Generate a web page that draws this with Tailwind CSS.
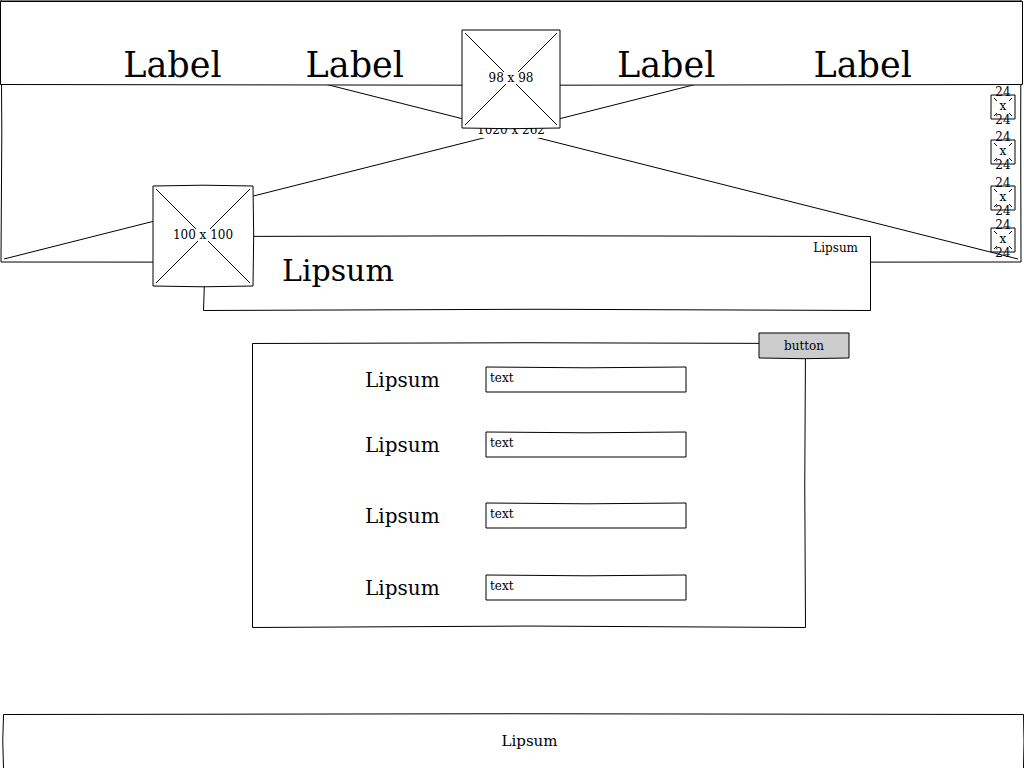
<!DOCTYPE html>
<html lang="en">
<head>
<meta charset="utf-8">
<meta name="viewport" content="width=device-width, initial-scale=1">
<title>Profile wireframe</title>
<script src="https://cdn.jsdelivr.net/npm/@tailwindcss/browser@4"></script>
</head>
<body class="flex min-h-screen flex-col overflow-x-hidden bg-white font-['DejaVu_Serif',serif] text-xs text-black">

<!-- Hero picture with the navigation bar over its top -->
<div class="relative">
  <div class="absolute inset-0 ml-px mr-[3px] flex items-center justify-center">
    <svg class="absolute inset-0 size-full overflow-visible" viewBox="0 0 1020 262" preserveAspectRatio="none" fill="none" stroke="black" aria-hidden="true">
      <path vector-effect="non-scaling-stroke" d="M0 0H1020Q1019.4 131 1020 262Q510 262.8 0 262Q1.6 131 0 0ZM3 3L1017 259M1017 3L3 259"/>
    </svg>
    <span class="relative bg-white pb-0.5 leading-[12px]">1020 x 262</span>
  </div>

  <header class="relative mr-[2px] grid h-[84px] grid-cols-[1fr_98px_1fr] grid-rows-[84px]">
    <svg class="absolute left-0 top-0 h-full w-[calc(100%+1px)] overflow-visible" viewBox="0 0 1023 84" preserveAspectRatio="none" fill="white" stroke="black" aria-hidden="true">
      <path vector-effect="non-scaling-stroke" d="M0.5 1.5H1022.5V84.5Q511 86 0.5 84.5Z"/>
    </svg>
    <nav class="relative flex items-end justify-end gap-[84px] pr-[58px] text-[35px] leading-[38px]" aria-label="Main left">
      <a href="#">Label</a>
      <a href="#">Label</a>
    </nav>
    <a href="#" class="relative mt-[30px] flex h-[98px] items-center justify-center pb-0.5">
      <svg class="absolute inset-0 size-full overflow-visible" viewBox="0 0 98 98" fill="white" stroke="black" aria-hidden="true">
        <path d="M0 0H98V98Q49 99.4 0 98Z"/>
        <path d="M3 3L95 95M95 3L3 95"/>
      </svg>
      <span class="relative bg-white leading-[12px]">98 x 98</span>
    </a>
    <nav class="relative flex items-end gap-[98px] pl-[57px] text-[35px] leading-[38px]" aria-label="Main right">
      <a href="#">Label</a>
      <a href="#">Label</a>
    </nav>
  </header>

  <div class="flex h-[178px] flex-col items-end pr-[9px] pt-[11px]">
    <a href="#" class="relative flex size-6 flex-col items-center justify-center pb-0.5 leading-[14px]">
      <svg class="absolute inset-0 size-full overflow-visible" viewBox="0 0 24 24" fill="white" stroke="black" aria-hidden="true">
        <path d="M0 0H24V24H0Z"/><path d="M3 3L6 6M21 3L18 6M3 21L6 18M21 21L18 18"/>
      </svg>
      <span class="relative">24</span><span class="relative">x</span><span class="relative">24</span>
    </a>
    <a href="#" class="relative mt-[21px] flex size-6 flex-col items-center justify-center pb-0.5 leading-[14px]">
      <svg class="absolute inset-0 size-full overflow-visible" viewBox="0 0 24 24" fill="white" stroke="black" aria-hidden="true">
        <path d="M0 0H24V24H0Z"/><path d="M3 3L6 6M21 3L18 6M3 21L6 18M21 21L18 18"/>
      </svg>
      <span class="relative">24</span><span class="relative">x</span><span class="relative">24</span>
    </a>
    <a href="#" class="relative mt-[22px] flex size-6 flex-col items-center justify-center pb-0.5 leading-[14px]">
      <svg class="absolute inset-0 size-full overflow-visible" viewBox="0 0 24 24" fill="white" stroke="black" aria-hidden="true">
        <path d="M0 0H24V24H0Z"/><path d="M3 3L6 6M21 3L18 6M3 21L6 18M21 21L18 18"/>
      </svg>
      <span class="relative">24</span><span class="relative">x</span><span class="relative">24</span>
    </a>
    <a href="#" class="relative mt-[18px] flex size-6 flex-col items-center justify-center pb-0.5 leading-[14px]">
      <svg class="absolute inset-0 size-full overflow-visible" viewBox="0 0 24 24" fill="white" stroke="black" aria-hidden="true">
        <path d="M0 0H24V24H0Z"/><path d="M3 3L6 6M21 3L18 6M3 21L6 18M21 21L18 18"/>
      </svg>
      <span class="relative">24</span><span class="relative">x</span><span class="relative">24</span>
    </a>
  </div>
</div>

<main>
  <!-- Name banner, overlapping the hero picture -->
  <section class="relative -mt-[26px] ml-[203px] mr-[153px] flex h-[75px] items-start justify-between pl-[79px] pr-[13px] pt-[5px]">
    <svg class="absolute inset-0 size-full overflow-visible" viewBox="0 0 668 75" preserveAspectRatio="none" fill="white" stroke="black" aria-hidden="true">
      <path vector-effect="non-scaling-stroke" d="M0.5 0.5Q334 -1 667.5 0.5V74.5Q334 72 0.5 74.5Q3 37 0.5 0.5Z"/>
    </svg>
    <div class="absolute -left-[50px] -top-[50px] flex size-[100px] items-center justify-center pb-0.5">
      <svg class="absolute inset-0 size-full overflow-visible" viewBox="0 0 100 100" fill="white" stroke="black" aria-hidden="true">
        <path d="M0 0Q50 -1.6 100 0Q101.4 50 100 100Q50 101.6 0 100Z"/>
        <path d="M3 3L97 97M97 3L3 97"/>
      </svg>
      <span class="relative bg-white leading-[12px]">100 x 100</span>
    </div>
    <h1 class="relative mt-[12px] text-[30px] leading-[36px]">Lipsum</h1>
    <p class="relative leading-[14px]">Lipsum</p>
  </section>

  <form class="relative ml-[252px] mr-[218px] mt-[32px] pb-[28px] pl-[113px] pr-[120px] pt-6 text-xl">
    <svg class="absolute inset-0 size-full overflow-visible" viewBox="0 0 554 285" preserveAspectRatio="none" fill="white" stroke="black" aria-hidden="true">
      <path vector-effect="non-scaling-stroke" d="M0.5 0.5Q277 -1 553.5 0.5Q552 142 553.5 284.5Q277 281.6 0.5 284.5Z"/>
    </svg>
    <button type="button" class="absolute -right-[43px] -top-[10px] flex h-[25px] w-[90px] items-center justify-center text-xs">
      <svg class="absolute inset-0 size-full overflow-visible" viewBox="0 0 90 25" fill="#cccccc" stroke="black" aria-hidden="true">
        <path d="M0 0H90V25Q45 26.4 0 25Z"/>
      </svg>
      <span class="relative">button</span>
    </button>

    <div class="relative flex h-[25px] items-center">
      <label for="f1" class="w-[121px]">Lipsum</label>
      <span class="relative h-[25px] flex-1">
        <svg class="absolute inset-0 size-full overflow-visible" viewBox="0 0 200 25" preserveAspectRatio="none" fill="white" stroke="black" aria-hidden="true">
          <path vector-effect="non-scaling-stroke" d="M0 0Q100 1.6 200 0V25H0Z"/>
        </svg>
        <input id="f1" type="text" value="text" class="relative block h-[22px] w-full px-1 text-xs outline-none">
      </span>
    </div>
    <div class="relative mt-10 flex h-[25px] items-center">
      <label for="f2" class="w-[121px]">Lipsum</label>
      <span class="relative h-[25px] flex-1">
        <svg class="absolute inset-0 size-full overflow-visible" viewBox="0 0 200 25" preserveAspectRatio="none" fill="white" stroke="black" aria-hidden="true">
          <path vector-effect="non-scaling-stroke" d="M0 0Q100 1.6 200 0V25H0Z"/>
        </svg>
        <input id="f2" type="text" value="text" class="relative block h-[22px] w-full px-1 text-xs outline-none">
      </span>
    </div>
    <div class="relative mt-[46px] flex h-[25px] items-center">
      <label for="f3" class="w-[121px]">Lipsum</label>
      <span class="relative h-[25px] flex-1">
        <svg class="absolute inset-0 size-full overflow-visible" viewBox="0 0 200 25" preserveAspectRatio="none" fill="white" stroke="black" aria-hidden="true">
          <path vector-effect="non-scaling-stroke" d="M0 0Q100 1.6 200 0V25H0Z"/>
        </svg>
        <input id="f3" type="text" value="text" class="relative block h-[22px] w-full px-1 text-xs outline-none">
      </span>
    </div>
    <div class="relative mt-[47px] flex h-[25px] items-center">
      <label for="f4" class="w-[121px]">Lipsum</label>
      <span class="relative h-[25px] flex-1">
        <svg class="absolute inset-0 size-full overflow-visible" viewBox="0 0 200 25" preserveAspectRatio="none" fill="white" stroke="black" aria-hidden="true">
          <path vector-effect="non-scaling-stroke" d="M0 0Q100 1.6 200 0V25H0Z"/>
        </svg>
        <input id="f4" type="text" value="text" class="relative block h-[22px] w-full px-1 text-xs outline-none">
      </span>
    </div>
  </form>
</main>

<footer class="relative ml-[3px] mt-auto flex h-[54px] items-center justify-center pl-8 text-[15px]">
  <svg class="absolute inset-0 size-full overflow-visible" viewBox="0 0 1021 54" preserveAspectRatio="none" fill="none" stroke="black" aria-hidden="true">
    <path vector-effect="non-scaling-stroke" d="M0.5 54Q-1 27 0.5 0.5Q510 -1 1020.5 0.5Q1021.5 27 1020.5 54"/>
  </svg>
  <p class="relative leading-[20px]">Lipsum</p>
</footer>

</body>
</html>
